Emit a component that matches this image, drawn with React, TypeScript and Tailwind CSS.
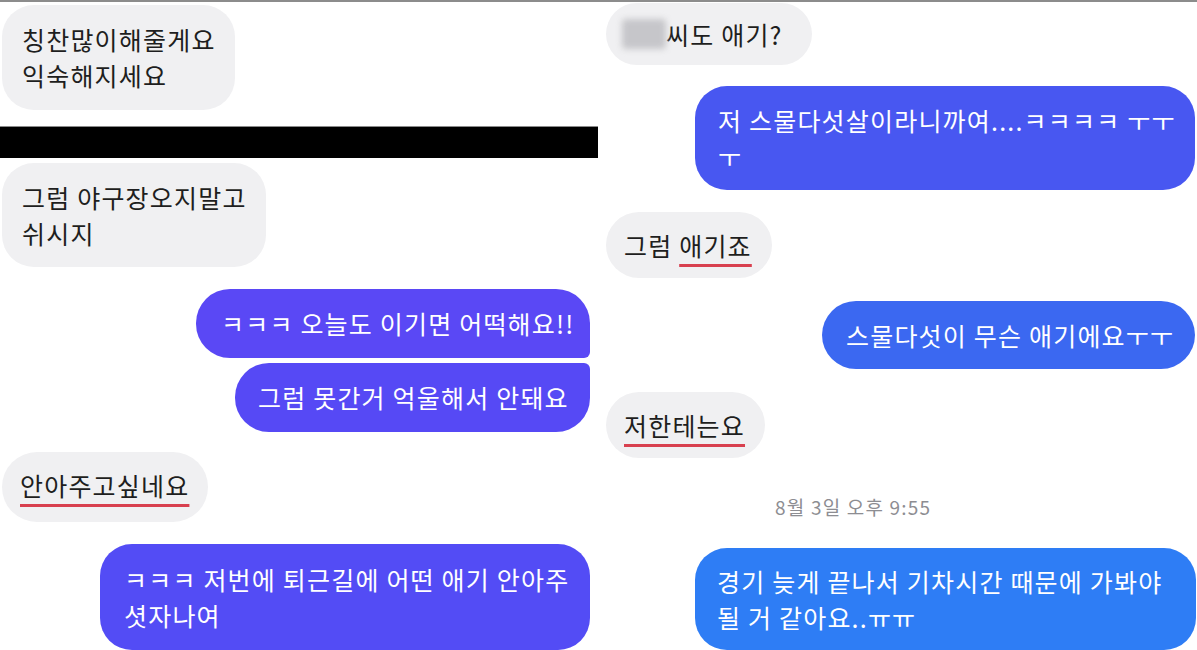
const font = { fontFamily: '"Noto Sans CJK KR", "Noto Sans", sans-serif' };

function Mark({ children }: { children: React.ReactNode }) {
  return (
    <span className="underline decoration-[#d8404f] decoration-[3px] underline-offset-[8px]">{children}</span>
  );
}

export default function App() {
  return (
    <div className="w-[1197px] h-[650px] overflow-hidden bg-white border-t-2 border-[#8c8c8c] flex" style={font}>
      {/* left screenshot */}
      <div className="w-[598px] shrink-0 flex flex-col text-[25px] leading-[36px] tracking-[1.2px] text-[#1e1e20] whitespace-nowrap">
        <div className="ml-[2px] mt-[3px] w-[233px] h-[105px] rounded-[32px] bg-[#f0f0f2] px-[20px] py-[16px]">
          칭찬많이해줄게요
          <br />
          익숙해지세요
        </div>

        <div className="mt-[16px] h-[32px] bg-black border-t border-[#8a8a8a]" />

        <div className="ml-[2px] mt-[5px] w-[264px] h-[105px] rounded-[32px] bg-[#f0f0f2] px-[20px] py-[16px]">
          그럼 야구장오지말고
          <br />
          쉬시지
        </div>

        <div className="self-end mr-[8px] mt-[22px] w-[394px] h-[69px] rounded-[34px] rounded-br-[6px] bg-[#5a48f5] text-white pl-[25px] py-[16px]">
          ㅋㅋㅋ 오늘도 이기면 어떡해요!!
        </div>
        <div className="self-end mr-[8px] mt-[5px] w-[355px] h-[69px] rounded-[34px] rounded-tr-[6px] bg-[#5649f5] text-white pl-[23px] py-[16px]">
          그럼 못간거 억울해서 안돼요
        </div>

        <div className="ml-[2px] mt-[20px] w-[206px] h-[70px] rounded-[35px] bg-[#f0f0f2] px-[18px] py-[15px]">
          <Mark>안아주고싶네요</Mark>
        </div>

        <div className="self-end mr-[8px] mt-[22px] w-[490px] h-[106px] rounded-[32px] bg-[#534cf5] text-white pl-[24px] py-[17px]">
          ㅋㅋㅋ 저번에 퇴근길에 어떤 애기 안아주
          <br />
          셧자나여
        </div>
      </div>

      {/* right screenshot */}
      <div className="flex-1 flex flex-col text-[25px] leading-[36px] tracking-[1.2px] text-[#1e1e20] whitespace-nowrap">
        <div className="ml-[8px] mt-[1px] w-[206px] h-[67px] rounded-[34px] bg-[#f0f0f2] pl-[16px] flex items-center">
          <span className="inline-block w-[44px] h-[30px] rounded-[4px] bg-[#c6c6ca] blur-[3px]" />
          <span>씨도 애기?</span>
        </div>

        <div className="self-end mr-[2px] mt-[21px] w-[500px] h-[104px] rounded-[32px] bg-[#4857f1] text-white pl-[23px] py-[16px]">
          저 스물다섯살이라니까여....ㅋㅋㅋㅋ ㅜㅜ
          <br />
          ㅜ
        </div>

        <div className="ml-[8px] mt-[22px] w-[166px] h-[68px] rounded-[34px] bg-[#f0f0f2] pl-[18px] py-[15px]">
          그럼 <Mark>애기죠</Mark>
        </div>

        <div className="self-end mr-[2px] mt-[23px] w-[373px] h-[69px] rounded-[34px] bg-[#3b68f1] text-white pl-[24px] py-[16px]">
          스물다섯이 무슨 애기에요ㅜㅜ
        </div>

        <div className="ml-[8px] mt-[23px] w-[159px] h-[68px] rounded-[34px] bg-[#f0f0f2] pl-[18px] py-[15px]">
          <Mark>저한테는요</Mark>
        </div>

        <div className="ml-[177px] mt-[36px] text-[19px] leading-[26px] tracking-[1.2px] text-[#8d8d92]">8월 3일 오후 9:55</div>

        <div className="self-end mr-[1px] mt-[28px] w-[501px] h-[104px] rounded-[32px] bg-[#2e7df5] text-white pl-[22px] py-[15px]">
          경기 늦게 끝나서 기차시간 때문에 가봐야
          <br />
          될 거 같아요..ㅠㅠ
        </div>
      </div>
    </div>
  );
}
